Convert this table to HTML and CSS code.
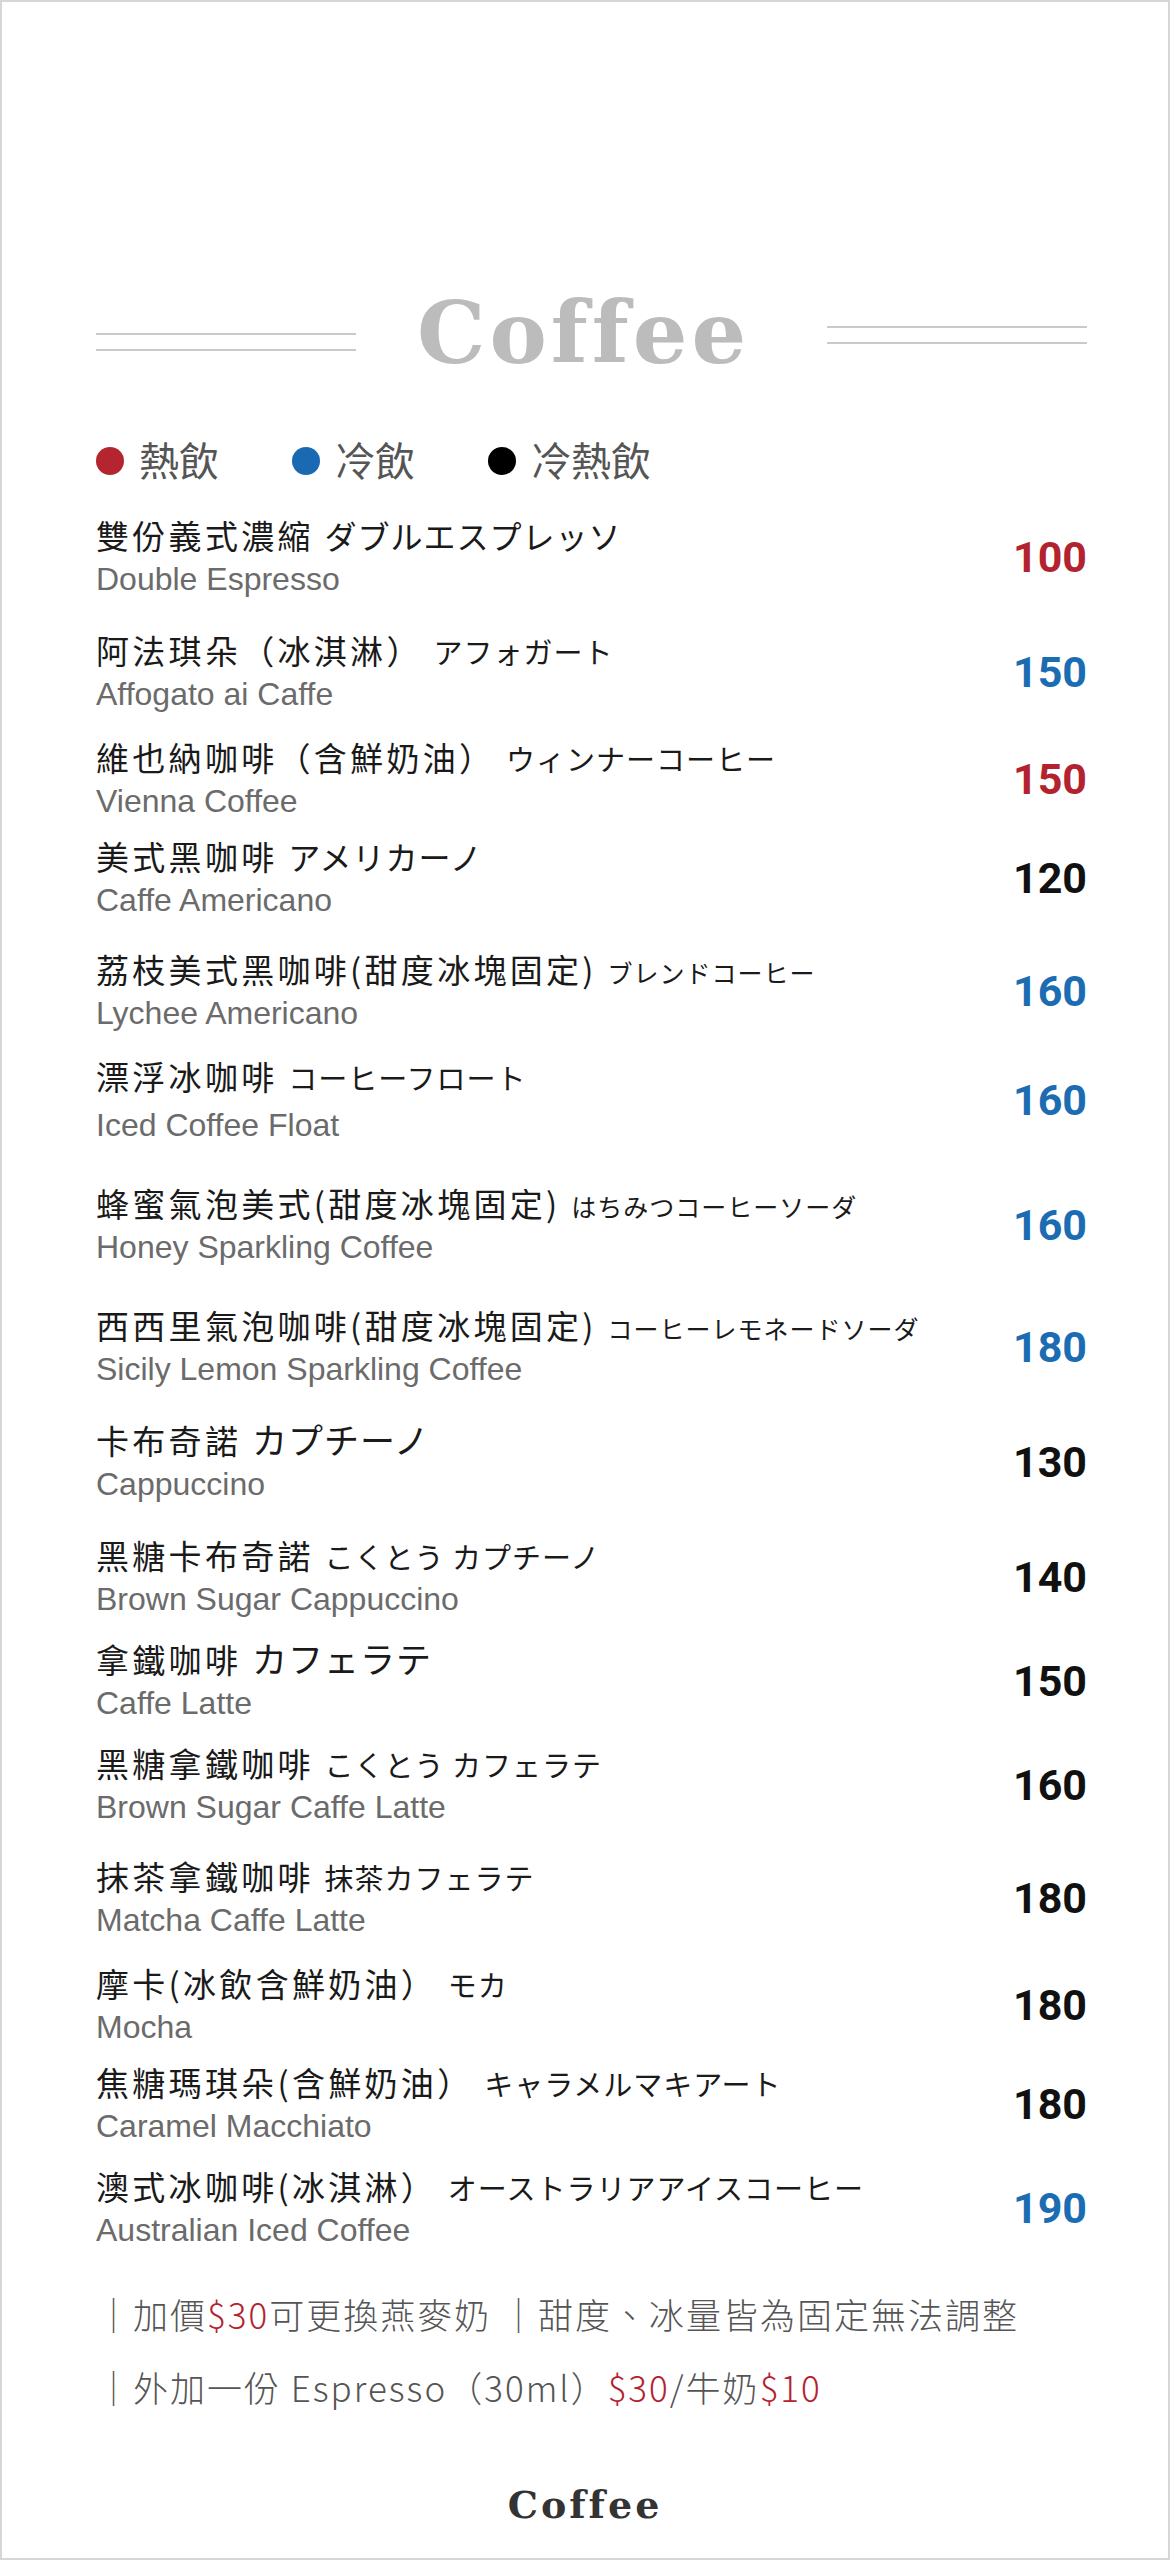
FILE: index.html
```html
<!DOCTYPE html>
<html lang="zh-Hant">
<head>
<meta charset="utf-8">
<title>Coffee Menu</title>
<link rel="stylesheet" href="styles.css">
</head>
<body>
<div class="page">
  <header class="title-row">
    <span class="rule rule--left"></span>
    <h1 class="title">Coffee</h1>
    <span class="rule rule--right"></span>
  </header>

  <ul class="legend">
    <li class="legend-item"><span class="dot dot--hot"></span>熱飲</li>
    <li class="legend-item"><span class="dot dot--ice"></span>冷飲</li>
    <li class="legend-item"><span class="dot dot--both"></span>冷熱飲</li>
  </ul>

  <ul class="menu">
    <li class="item">
      <div class="names">
        <p class="zh">雙份義式濃縮 <span class="jp jp--lg">ダブルエスプレッソ</span></p>
        <p class="en">Double Espresso</p>
      </div>
      <span class="price price--hot">100</span>
    </li>
    <li class="item item--l">
      <div class="names">
        <p class="zh">阿法琪朵（冰淇淋） <span class="jp">アフォガート</span></p>
        <p class="en">Affogato ai Caffe</p>
      </div>
      <span class="price price--ice">150</span>
    </li>
    <li class="item">
      <div class="names">
        <p class="zh">維也納咖啡（含鮮奶油） <span class="jp">ウィンナーコーヒー</span></p>
        <p class="en">Vienna Coffee</p>
      </div>
      <span class="price price--hot">150</span>
    </li>
    <li class="item item--xs">
      <div class="names">
        <p class="zh">美式黑咖啡 <span class="jp jp--lg">アメリカーノ</span></p>
        <p class="en">Caffe Americano</p>
      </div>
      <span class="price price--both">120</span>
    </li>
    <li class="item item--m">
      <div class="names">
        <p class="zh">荔枝美式黑咖啡(甜度冰塊固定) <span class="jp jp--sm">ブレンドコーヒー</span></p>
        <p class="en">Lychee Americano</p>
      </div>
      <span class="price price--ice">160</span>
    </li>
    <li class="item">
      <div class="names">
        <p class="zh">漂浮冰咖啡 <span class="jp">コーヒーフロート</span></p>
        <p class="en en--low">Iced Coffee Float</p>
      </div>
      <span class="price price--ice">160</span>
    </li>
    <li class="item item--xl">
      <div class="names">
        <p class="zh">蜂蜜氣泡美式(甜度冰塊固定) <span class="jp jp--sm">はちみつコーヒーソーダ</span></p>
        <p class="en">Honey Sparkling Coffee</p>
      </div>
      <span class="price price--ice">160</span>
    </li>
    <li class="item item--xl">
      <div class="names">
        <p class="zh">西西里氣泡咖啡(甜度冰塊固定) <span class="jp jp--sm">コーヒーレモネードソーダ</span></p>
        <p class="en">Sicily Lemon Sparkling Coffee</p>
      </div>
      <span class="price price--ice">180</span>
    </li>
    <li class="item item--l">
      <div class="names">
        <p class="zh">卡布奇諾 <span class="jp jp--xl">カプチーノ</span></p>
        <p class="en">Cappuccino</p>
      </div>
      <span class="price price--both">130</span>
    </li>
    <li class="item item--l">
      <div class="names">
        <p class="zh">黑糖卡布奇諾 <span class="jp">こくとう カプチーノ</span></p>
        <p class="en">Brown Sugar Cappuccino</p>
      </div>
      <span class="price price--both">140</span>
    </li>
    <li class="item item--s">
      <div class="names">
        <p class="zh">拿鐵咖啡 <span class="jp jp--xl">カフェラテ</span></p>
        <p class="en">Caffe Latte</p>
      </div>
      <span class="price price--both">150</span>
    </li>
    <li class="item item--s">
      <div class="names">
        <p class="zh">黑糖拿鐵咖啡 <span class="jp">こくとう カフェラテ</span></p>
        <p class="en">Brown Sugar Caffe Latte</p>
      </div>
      <span class="price price--both">160</span>
    </li>
    <li class="item item--m">
      <div class="names">
        <p class="zh">抹茶拿鐵咖啡 <span class="jp">抹茶カフェラテ</span></p>
        <p class="en">Matcha Caffe Latte</p>
      </div>
      <span class="price price--both">180</span>
    </li>
    <li class="item">
      <div class="names">
        <p class="zh">摩卡(冰飲含鮮奶油） <span class="jp">モカ</span></p>
        <p class="en">Mocha</p>
      </div>
      <span class="price price--both">180</span>
    </li>
    <li class="item item--xs">
      <div class="names">
        <p class="zh">焦糖瑪琪朵(含鮮奶油） <span class="jp">キャラメルマキアート</span></p>
        <p class="en">Caramel Macchiato</p>
      </div>
      <span class="price price--both">180</span>
    </li>
    <li class="item item--s">
      <div class="names">
        <p class="zh">澳式冰咖啡(冰淇淋） <span class="jp">オーストラリアアイスコーヒー</span></p>
        <p class="en">Australian Iced Coffee</p>
      </div>
      <span class="price price--ice">190</span>
    </li>
  </ul>

  <div class="notes">
    <p class="note">｜加價<span class="hl">$30</span>可更換燕麥奶 ｜甜度、冰量皆為固定無法調整</p>
    <p class="note">｜外加一份 Espresso（30ml）<span class="hl">$30</span>/牛奶<span class="hl">$10</span></p>
  </div>

  <footer class="footer">Coffee</footer>
</div>
</body>
</html>
```

FILE: styles.css
```css
* {
  margin: 0;
  padding: 0;
  box-sizing: border-box;
}

html, body {
  background: #ffffff;
}

body {
  margin: 0;
}

.page {
  width: 1170px;
  height: 2560px;
  border: 2px solid #d6d6d6;
  padding: 288px 81px 0 94px;
  font-family: "Noto Sans CJK TC", "Noto Sans CJK JP", sans-serif;
  background: #ffffff;
  overflow: hidden;
}

ul {
  list-style: none;
}

/* Title */
.title-row {
  display: flex;
  align-items: center;
  height: 86px;
}

.rule {
  flex: none;
  width: 260px;
  height: 18px;
  border-top: 2px solid #cacaca;
  border-bottom: 2px solid #cacaca;
}

.rule--left {
  margin-top: 18px;
}

.rule--right {
  margin-top: 3px;
  margin-left: auto;
}

.title {
  margin-left: 61px;
  font-family: "DejaVu Serif", serif;
  font-weight: 700;
  font-size: 86px;
  line-height: 86px;
  letter-spacing: 4px;
  color: #bcbcbc;
}

/* Legend */
.legend {
  display: flex;
  align-items: center;
  height: 48px;
  margin-top: 59px;
}

.legend-item {
  display: flex;
  align-items: center;
  gap: 15px;
  margin-right: 73px;
  font-size: 40px;
  line-height: 48px;
  color: #555555;
}

.dot {
  flex: none;
  width: 28px;
  height: 28px;
  border-radius: 50%;
  margin-top: 4px;
}

.dot--hot { background: #b5252f; }
.dot--ice { background: #1a6ab3; }
.dot--both { background: #000000; }

/* Menu */
.menu {
  margin-top: 32px;
}

.item {
  display: flex;
  align-items: center;
  justify-content: space-between;
  margin-top: 23px;
}

.item:first-child {
  margin-top: 0;
}

.item--xs { margin-top: 15px; }
.item--s { margin-top: 20px; }
.item--m { margin-top: 29px; }
.item--l { margin-top: 31px; }
.item--xl { margin-top: 38px; }

.zh {
  font-size: 33px;
  line-height: 40px;
  letter-spacing: 0.1em;
  color: #1a1a1a;
  white-space: nowrap;
}

.jp {
  font-family: "Noto Sans CJK JP", "Noto Sans CJK TC", sans-serif;
  font-size: 29px;
  letter-spacing: 1px;
  line-height: 1;
}

.jp--lg { font-size: 32px; }
.jp--xl { font-size: 35px; }
.jp--sm { font-size: 25px; }

.en {
  margin-top: 4px;
  font-family: "Liberation Sans", Arial, sans-serif;
  font-size: 32px;
  line-height: 40px;
  color: #6b6b6b;
}

.en--low {
  margin-top: 9px;
}

.price {
  font-family: "Roboto", "Open Sans", sans-serif;
  font-weight: 700;
  font-size: 43px;
  line-height: 43px;
}

.price--hot { color: #b3232f; }
.price--ice { color: #1b6cb3; }
.price--both { color: #111111; }

/* Notes */
.notes {
  margin-top: 42px;
  font-size: 35px;
  letter-spacing: 2px;
  font-weight: 300;
  color: #555555;
}

.note {
  line-height: 44px;
  white-space: nowrap;
}

.note + .note {
  margin-top: 29px;
}

.hl {
  color: #b3232f;
}

/* Footer */
.footer {
  margin-top: 77px;
  padding-right: 13px;
  text-align: center;
  font-family: "DejaVu Serif", serif;
  font-weight: 700;
  font-size: 38px;
  line-height: 38px;
  letter-spacing: 3px;
  color: #333333;
}
```
